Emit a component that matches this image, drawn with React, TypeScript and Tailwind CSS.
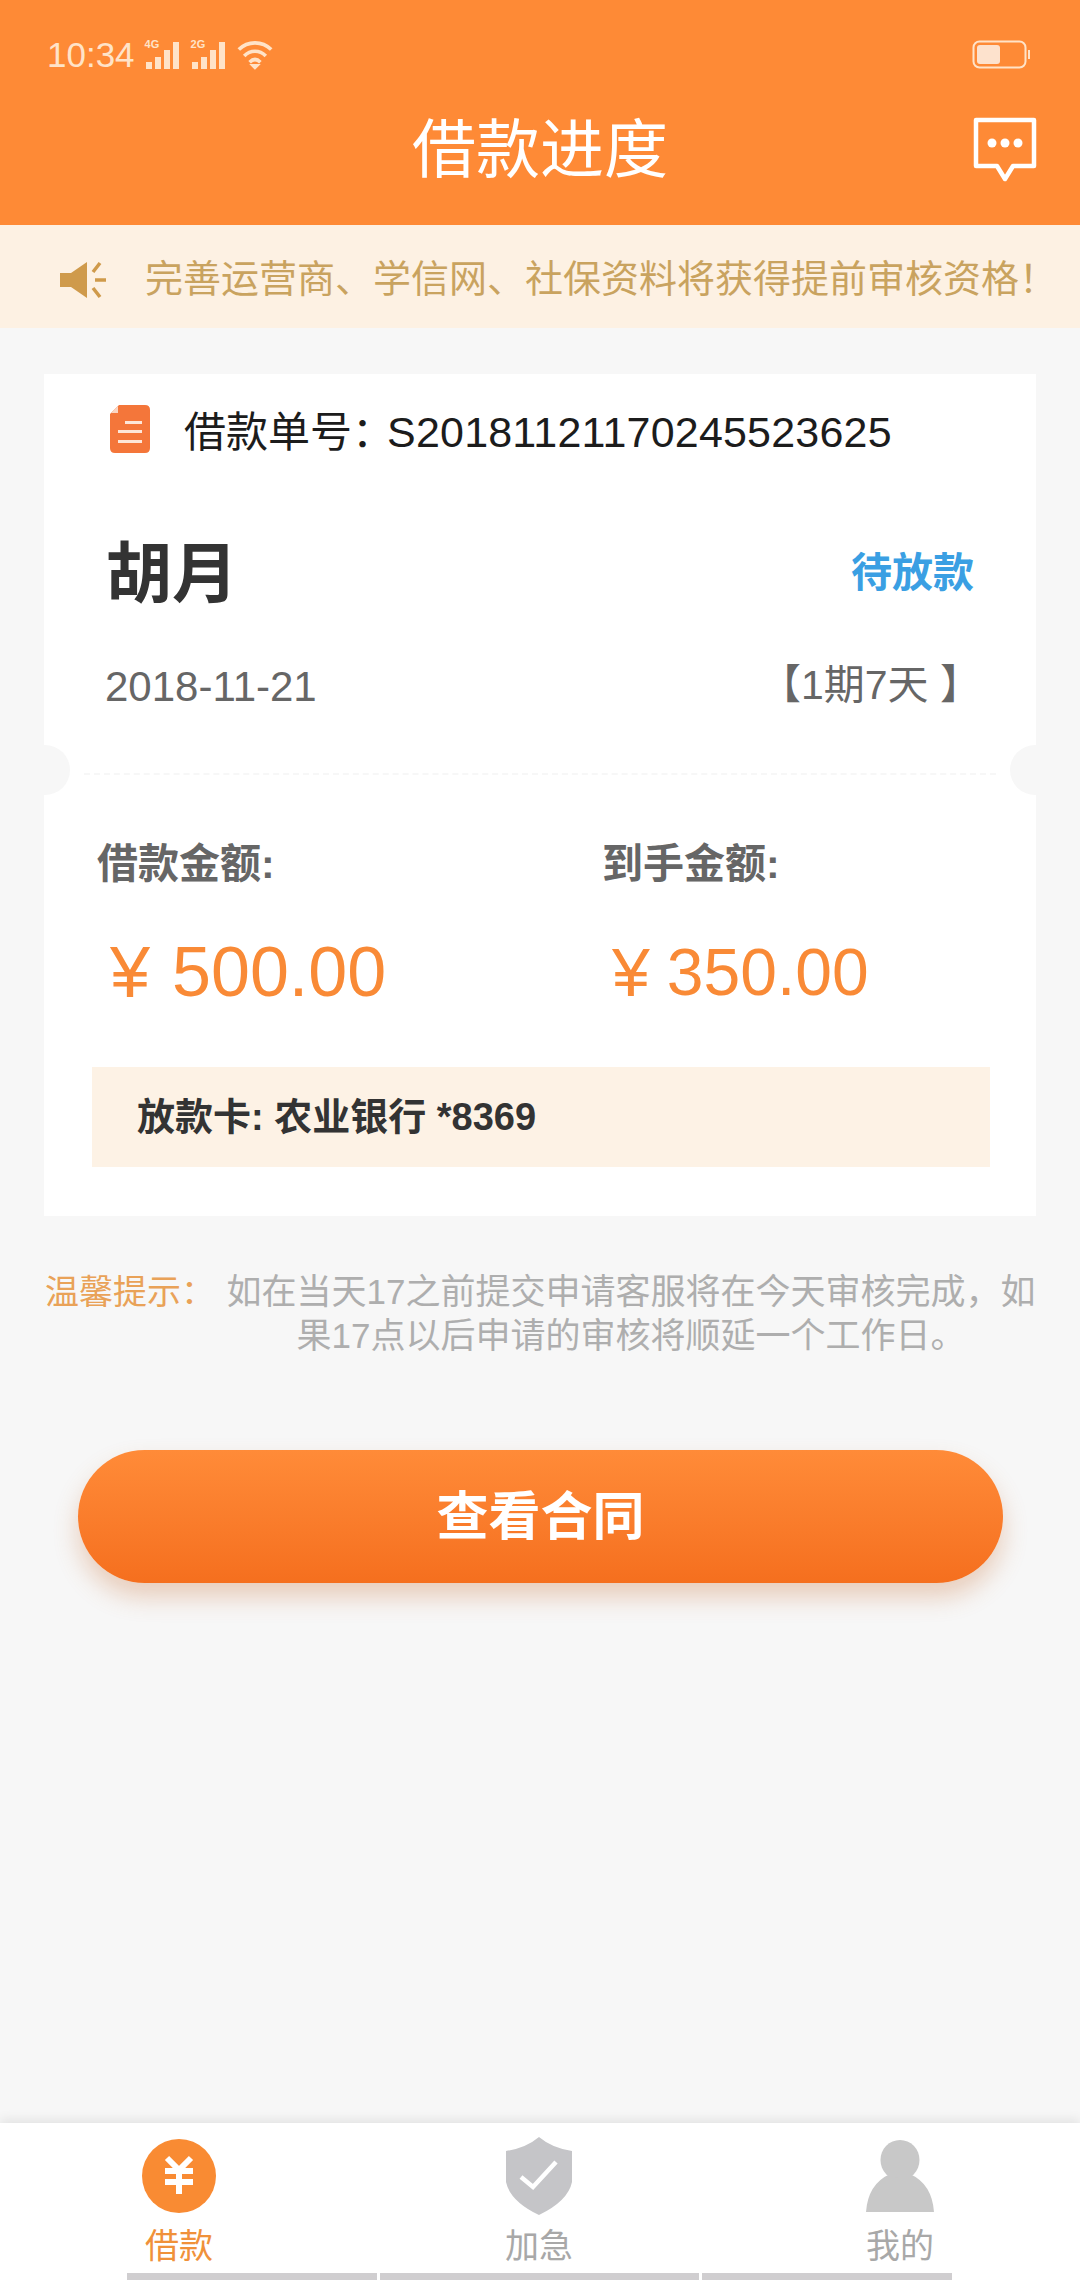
import React from "react";

function Signal({ label }: { label: string }) {
  return (
    <div className="relative w-[36px] h-[30px]">
      <span className="absolute left-0 top-[-2px] text-[11px] leading-[12px] font-bold text-[#ffe3c8]">{label}</span>
      <svg viewBox="0 0 36 30" className="absolute inset-0 w-[36px] h-[30px]" fill="#ffe3c8">
        <rect x="1" y="22" width="6" height="7" />
        <rect x="10" y="17" width="6" height="12" />
        <rect x="19" y="10" width="6" height="19" />
        <rect x="28" y="2" width="6" height="27" />
      </svg>
    </div>
  );
}

function Wifi() {
  return (
    <svg viewBox="0 0 40 34" className="w-[36px] h-[34px]" fill="none" stroke="#ffe3c8" strokeWidth="4">
      <path d="M2 11 C12 1 28 1 38 11" />
      <path d="M8 18 C15 11 25 11 32 18" />
      <path d="M14 25 C18 21 22 21 26 25" />
      <path d="M20 32 L16 28 L24 28 Z" fill="#ffe3c8" strokeWidth="2" />
    </svg>
  );
}

function Battery() {
  return (
    <svg viewBox="0 0 60 30" className="w-[60px] h-[30px]">
      <rect x="1.5" y="1.5" width="52" height="26" rx="6" fill="none" stroke="#ffe3c8" strokeWidth="2" />
      <rect x="5" y="5" width="23" height="19" rx="3" fill="#fde2cd" />
      <rect x="56" y="10" width="2" height="9" fill="#ffe3c8" />
    </svg>
  );
}

function Chat() {
  return (
    <svg viewBox="0 0 66 68" className="w-[66px] h-[68px]">
      <path d="M4 4 H62 V50 H41 L33 63 L25 50 H4 Z" fill="none" stroke="#fff" strokeWidth="4.5" strokeLinejoin="round" />
      <circle cx="20" cy="27" r="4.5" fill="#fff" />
      <circle cx="33" cy="27" r="4.5" fill="#fff" />
      <circle cx="46" cy="27" r="4.5" fill="#fff" />
    </svg>
  );
}

function Speaker() {
  return (
    <svg viewBox="0 0 46 38" className="w-[46px] h-[38px]">
      <path d="M0 12 H11 L27 1 V37 L11 26 H0 Z" fill="#cf9a4b" />
      <path d="M33 11 L40 2 M35 19 H46 M33 27 L40 36" stroke="#cf9a4b" strokeWidth="3.5" fill="none" />
    </svg>
  );
}

function DocIcon() {
  return (
    <svg viewBox="0 0 40 50" className="w-[40px] h-[50px] mt-[-6px]">
      <path d="M9 1 H35 Q40 1 40 6 V44 Q40 49 35 49 H5 Q0 49 0 44 V10 Z" fill="#f4763a" />
      <path d="M1 9 L8 2 V9 Z" fill="#fbd5c2" />
      <rect x="15" y="17" width="17" height="3" fill="#fde6d8" />
      <rect x="8" y="26" width="24" height="3" fill="#fde6d8" />
      <rect x="8" y="36" width="24" height="3" fill="#fde6d8" />
    </svg>
  );
}

function YuanTab() {
  return (
    <svg viewBox="0 0 74 74" className="w-[74px] h-[74px]">
      <circle cx="37" cy="37" r="37" fill="#f98b33" />
      <path d="M25 19 L37 31 L49 19 M23 32 H51 M23 43 H51 M37 31 V55" stroke="#fff" strokeWidth="6" fill="none" />
    </svg>
  );
}

function ShieldTab() {
  return (
    <svg viewBox="0 0 66 78" className="w-[66px] h-[78px]">
      <path d="M33 0 Q46 11 66 14 V45 Q62 64 33 78 Q4 64 0 45 V14 Q20 11 33 0 Z" fill="#c5c5c8" />
      <path d="M15 40 L27 50 L50 25" stroke="#fff" strokeWidth="4.5" fill="none" />
    </svg>
  );
}

function PersonTab() {
  return (
    <svg viewBox="0 0 68 72" className="w-[68px] h-[72px]">
      <ellipse cx="34" cy="20" rx="19.5" ry="20" fill="#c8c8c8" />
      <path d="M24 34 Q34 42 44 34 Q66 44 68 72 H0 Q2 44 24 34 Z" fill="#c8c8c8" />
    </svg>
  );
}

function Amount({ label, value, big }: { label: string; value: string; big: boolean }) {
  return (
    <div className="flex-1">
      <div className="text-[41px] leading-[50px] font-bold text-[#666]">{label}</div>
      {big ? (
        <div className="flex items-center h-[62px] mt-[52px] ml-[13px] text-[70px] text-[#f98a36]">
          <span className="mr-[22px] text-[72px]">¥</span>
          <span>{value}</span>
        </div>
      ) : (
        <div className="flex items-center h-[62px] mt-[52px] ml-[10px] text-[66px] text-[#f98a36]">
          <span className="mr-[17px] text-[68px]">¥</span>
          <span>{value}</span>
        </div>
      )}
    </div>
  );
}

function Tab({ icon, label, active, w }: { icon: React.ReactNode; label: string; active?: boolean; w: string }) {
  return (
    <div className={w + " flex flex-col items-center"}>
      <div className="h-[80px] flex items-center justify-center">{icon}</div>
      <div className={active ? "mt-[10px] text-[34px] leading-[40px] text-[#f0913a]" : "mt-[10px] text-[34px] leading-[40px] text-[#a8a8a8]"}>{label}</div>
    </div>
  );
}

export default function App() {
  return (
    <div className="w-[1080px] h-[2280px] flex flex-col bg-[#f7f7f7] overflow-hidden font-['Liberation_Sans','Noto_Sans_CJK_SC',sans-serif]">
      <header className="h-[225px] shrink-0 bg-[#fe8a36] flex flex-col pl-[42px] pr-[42px]">
        <div className="flex items-center justify-between h-[30px] mt-[40px]">
          <div className="flex items-center gap-[10px]">
            <span className="text-[35px] leading-[30px] ml-[5px] text-[#ffe3c8]">10:34</span>
            <Signal label="4G" />
            <Signal label="2G" />
            <Wifi />
          </div>
          <div className="mr-[6px]">
            <Battery />
          </div>
        </div>
        <div className="relative flex items-center justify-center mt-[42px] h-[76px]">
          <span className="text-[64px] leading-[76px] text-white">借款进度</span>
          <div className="absolute right-0 top-[4px]">
            <Chat />
          </div>
        </div>
      </header>

      <div className="h-[103px] shrink-0 bg-[#fdf1e3] flex items-center pl-[60px] pt-[6px] text-[38px] text-[#c9a35f]">
        <Speaker />
        <span className="ml-[39px] whitespace-nowrap">完善运营商、学信网、社保资料将获得提前审核资格！</span>
      </div>

      <main className="mx-[44px] mt-[46px] w-[992px] h-[842px] shrink-0 bg-white relative flex flex-col">
        <div className="flex items-center h-[78px] mt-[19px] pl-[66px]">
          <DocIcon />
          <span className="ml-[34px] text-[42px] text-[#1c1c1c] whitespace-nowrap">借款单号：</span>
          <span className="ml-[-7px] text-[43px] tracking-[0.2px] text-[#1c1c1c] whitespace-nowrap">S20181121170245523625</span>
        </div>
        <div className="flex items-center justify-between mt-[68px] pl-[62px] pr-[62px] h-[70px]">
          <span className="text-[66px] font-bold text-[#333]">胡月</span>
          <span className="text-[41px] font-bold text-[#3a9fe3]">待放款</span>
        </div>
        <div className="flex items-center justify-between mt-[52px] pl-[61px] pr-[55px] h-[50px] text-[42px] text-[#666]">
          <span>2018-11-21</span>
          <span className="text-[41px]">【1期7天 】</span>
        </div>

        <div className="absolute left-[-24px] top-[371px] w-[50px] h-[50px] rounded-full bg-[#f7f7f7]" />
        <div className="absolute right-[-24px] top-[371px] w-[50px] h-[50px] rounded-full bg-[#f7f7f7]" />

        <div className="mx-[40px] mt-[62px] border-t-[2px] border-dashed border-[#f7f7f7]" />

        <div className="flex mt-[64px] pl-[53px]">
          <Amount label="借款金额:" value="500.00" big />
          <div className="w-[434px] shrink-0">
            <Amount label="到手金额:" value="350.00" big={false} />
          </div>
        </div>

        <div className="mt-[64px] ml-[48px] mr-[46px] h-[100px] bg-[#fdf2e5] flex items-center pl-[45px] text-[38px] font-bold text-[#333]">
          放款卡: 农业银行 *8369
        </div>
      </main>

      <div className="mt-[54px] flex pl-[45px] pr-[43px] text-[35px] leading-[44px]">
        <span className="text-[#e9a258] text-[34px] whitespace-nowrap">温馨提示：</span>
        <p className="ml-[10px] flex-1 text-center text-[#aeaeae]">如在当天17之前提交申请客服将在今天审核完成，如果17点以后申请的审核将顺延一个工作日。</p>
      </div>

      <button className="mt-[92px] mx-[78px] h-[133px] w-[925px] rounded-full bg-gradient-to-b from-[#ff8b38] to-[#f56f1e] shadow-[0_14px_24px_rgba(200,110,50,0.3)] text-white text-[52px] font-bold">
        查看合同
      </button>

      <div className="flex-1" />

      <nav className="h-[157px] shrink-0 bg-white shadow-[0_-4px_10px_rgba(0,0,0,0.08)] relative">
        <div className="flex pt-[13px]">
          <Tab w="w-[358px]" icon={<YuanTab />} label="借款" active />
          <Tab w="w-[362px]" icon={<ShieldTab />} label="加急" />
          <Tab w="w-[360px]" icon={<PersonTab />} label="我的" />
        </div>
        <div className="absolute left-[127px] bottom-0 flex gap-[3px]">
          <div className="w-[250px] h-[7px] bg-[#d0ced0]" />
          <div className="w-[319px] h-[7px] bg-[#d0ced0]" />
          <div className="w-[250px] h-[7px] bg-[#d0ced0]" />
        </div>
      </nav>
    </div>
  );
}
